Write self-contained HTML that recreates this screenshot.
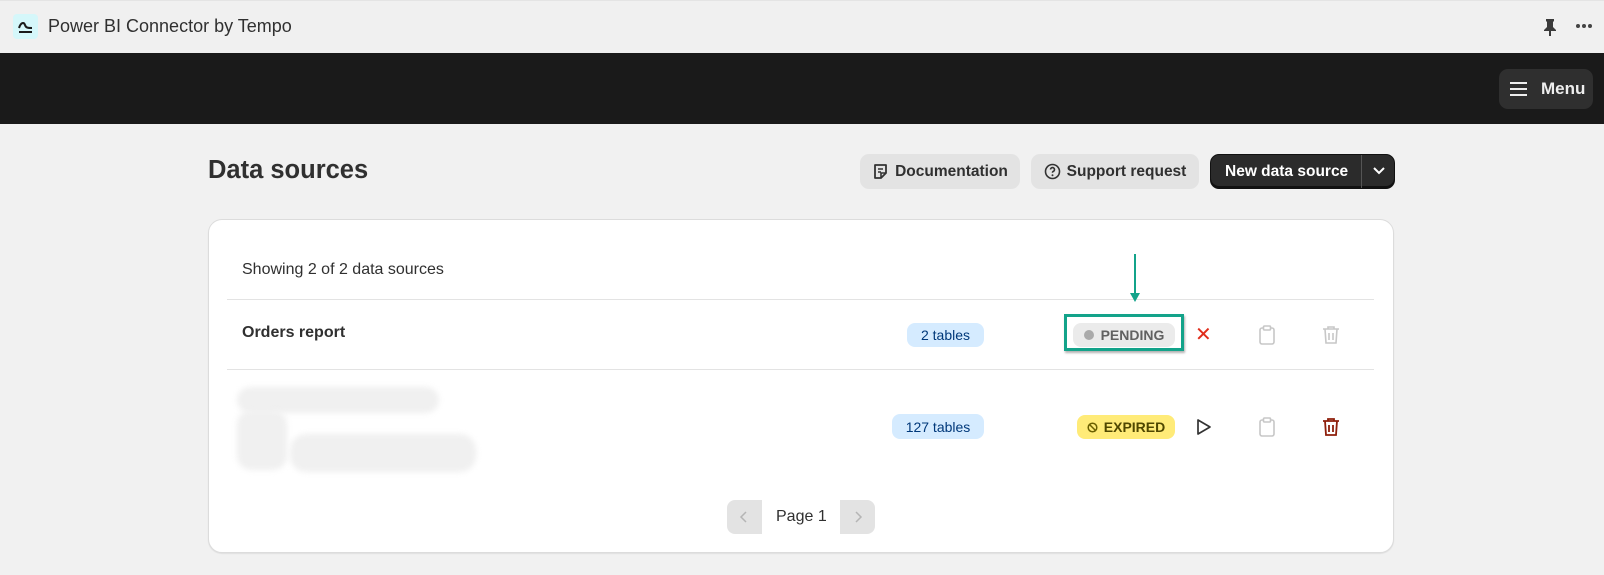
<!DOCTYPE html>
<html><head><style>
*{box-sizing:border-box;margin:0;padding:0}
body{width:1604px;height:575px;background:#f1f1f1;font-family:"Liberation Sans",sans-serif;color:#303030;position:relative;overflow:hidden}
.a{position:absolute}
.top{left:0;top:0;width:1604px;height:53px;background:#f0f0f0;border-top:1px solid #e4e4e4}
.dark{left:0;top:53px;width:1604px;height:71px;background:#1a1a1a}
.btn{position:absolute;height:35px;border-radius:9px;background:#e3e3e3;font-size:15px;font-weight:bold;color:#303030;display:flex;align-items:center;justify-content:center;gap:6px}
.card{left:208px;top:219px;width:1186px;height:334px;background:#fff;border:1px solid #dcdcdc;border-radius:14px;box-shadow:0 1px 1px rgba(0,0,0,.08)}
.pill{position:absolute;border-radius:8px;font-size:14px;display:flex;align-items:center;justify-content:center}
.hr{position:absolute;left:227px;width:1147px;height:1px;background:#e3e3e3}
</style></head><body>
<div class="a top"></div>
<div class="a" style="left:13px;top:14px;width:25px;height:25px;background:#d5f7fa;border-radius:4px"></div>
<svg class="a" style="left:16px;top:17px" width="20" height="20" viewBox="0 0 20 20"><path d="M3 11 C5 5,8 5,9 8 C10 11,12 11,16 11" fill="none" stroke="#1a1a1a" stroke-width="2"/><path d="M3 15H16" stroke="#1a1a1a" stroke-width="2"/></svg>
<div class="a" style="left:48px;top:16px;font-size:18px;color:#303030">Power BI Connector by Tempo</div>
<svg class="a" style="left:1542px;top:17px" width="16" height="20" viewBox="0 0 16 20"><path d="M4 2h8v2l-1 1v5l3 3v1H2v-1l3-3V5L4 4z" fill="#3a3a3a"/><path d="M8 14v5" stroke="#3a3a3a" stroke-width="2"/></svg>
<div class="a" style="left:1576px;top:24px;width:4px;height:4px;border-radius:2px;background:#444;box-shadow:6px 0 #444,12px 0 #444"></div>
<div class="a dark"></div>
<div class="a" style="left:1499px;top:69px;width:94px;height:40px;background:#2f2f2f;border-radius:9px"></div>
<div class="a" style="left:1510px;top:82px;width:17px;height:2px;background:#eee;box-shadow:0 6px #eee,0 12px #eee"></div>
<div class="a" style="left:1541px;top:79px;font-size:17px;font-weight:bold;color:#eee">Menu</div>
<div class="a" style="left:208px;top:156px;font-size:25.5px;font-weight:bold;color:#303030">Data sources</div>
<div class="btn" style="left:860px;top:154px;width:160px;font-size:15.5px"><svg width="17" height="17" viewBox="0 0 17 17"><path d="M3 2h11v8l-5 5H3z" fill="none" stroke="#333" stroke-width="1.8" stroke-linejoin="round"/><path d="M6 6h5M6 9h3M9 15v-5h5" fill="none" stroke="#333" stroke-width="1.6"/></svg>Documentation</div>
<div class="btn" style="left:1031px;top:154px;width:168px;font-size:15.5px"><svg width="17" height="17" viewBox="0 0 17 17"><circle cx="8.5" cy="8.5" r="7" fill="none" stroke="#333" stroke-width="1.6"/><path d="M6.5 6.5a2 2 0 1 1 2.5 2c-.5.2-.5.6-.5 1.3" fill="none" stroke="#333" stroke-width="1.6"/><circle cx="8.5" cy="12.3" r="1" fill="#333"/></svg>Support request</div>
<div class="a" style="left:1210px;top:154px;width:185px;height:35px;background:#2b2b2b;border-radius:9px;border:1px solid #111;box-shadow:inset 0 -2px #111"></div>
<div class="a" style="left:1225px;top:163px;font-size:15.5px;font-weight:bold;color:#fff">New data source</div>
<div class="a" style="left:1361px;top:155px;width:1px;height:33px;background:#555"></div>
<svg class="a" style="left:1372px;top:165px" width="14" height="12" viewBox="0 0 14 12"><path d="M2 3l5 5 5-5" fill="none" stroke="#fff" stroke-width="2"/></svg>
<div class="a card"></div>
<div class="a" style="left:242px;top:261px;font-size:16px">Showing 2 of 2 data sources</div>
<div class="hr" style="top:299px"></div>
<div class="hr" style="top:369px"></div>
<div class="a" style="left:242px;top:324px;font-size:16px;font-weight:bold">Orders report</div>
<div class="pill" style="left:907px;top:323px;width:77px;height:24px;background:#d5ebff;color:#00387a">2 tables</div>
<div class="a" style="left:1134px;top:254px;width:2px;height:44px;background:#13a38a"></div>
<svg class="a" style="left:1130px;top:293px" width="10" height="10"><path d="M0 0h10L5 9z" fill="#13a38a"/></svg>
<div class="a" style="left:1064px;top:314px;width:120px;height:37px;border:3px solid #13a38a;box-shadow:1px 2px 2px rgba(0,0,0,.3)"></div>
<div class="pill" style="left:1073px;top:323px;width:102px;height:24px;background:#ebebeb;color:#616161;font-weight:bold;gap:7px"><span style="width:10px;height:10px;border-radius:5px;background:#aaa"></span>PENDING</div>
<div class="a" style="left:1195px;top:322px;font-size:20px;color:#e02d1b">✕</div>
<svg class="a" style="left:1258px;top:325px" width="18" height="20" viewBox="0 0 18 20"><rect x="2" y="3" width="14" height="16" rx="2" fill="none" stroke="#c7c7c7" stroke-width="1.6"/><rect x="5.5" y="1" width="7" height="4" rx="1" fill="#fff" stroke="#c7c7c7" stroke-width="1.6"/></svg>
<svg class="a" style="left:1322px;top:325px" width="18" height="20" viewBox="0 0 18 20"><path d="M1 4h16M6 4V2h6v2M3 4l1 14h10l1-14M7 8v7M11 8v7" fill="none" stroke="#c7c7c7" stroke-width="1.6"/></svg>
<div class="a" style="left:237px;top:387px;width:202px;height:26px;border-radius:13px;background:#f0f0f0;filter:blur(3px)"></div>
<div class="a" style="left:237px;top:410px;width:50px;height:60px;border-radius:14px;background:#f0f0f0;filter:blur(3px)"></div>
<div class="a" style="left:290px;top:434px;width:186px;height:38px;border-radius:16px;background:#f0f0f0;filter:blur(3px)"></div>
<div class="pill" style="left:892px;top:414px;width:92px;height:25px;background:#d5ebff;color:#00387a">127 tables</div>
<div class="pill" style="left:1077px;top:415px;width:98px;height:24px;background:#ffeb78;color:#4f4700;font-weight:bold;gap:6px"><svg width="11" height="11" viewBox="0 0 11 11"><circle cx="5.5" cy="5.5" r="4.3" fill="none" stroke="#6b6000" stroke-width="1.5"/><path d="M2.5 2.5l6 6" stroke="#6b6000" stroke-width="1.5"/></svg>EXPIRED</div>
<svg class="a" style="left:1196px;top:418px" width="16" height="18" viewBox="0 0 16 18"><path d="M2 2l12 7-12 7z" fill="none" stroke="#333" stroke-width="1.7" stroke-linejoin="round"/></svg>
<svg class="a" style="left:1258px;top:417px" width="18" height="20" viewBox="0 0 18 20"><rect x="2" y="3" width="14" height="16" rx="2" fill="none" stroke="#c7c7c7" stroke-width="1.6"/><rect x="5.5" y="1" width="7" height="4" rx="1" fill="#fff" stroke="#c7c7c7" stroke-width="1.6"/></svg>
<svg class="a" style="left:1322px;top:417px" width="18" height="20" viewBox="0 0 18 20"><path d="M1 4h16M6 4V2h6v2M3 4l1 14h10l1-14M7 8v7M11 8v7" fill="none" stroke="#8e1f0b" stroke-width="1.8"/></svg>
<div class="a" style="left:727px;top:500px;width:35px;height:34px;background:#e3e3e3;border-radius:8px 0 0 8px"></div>
<div class="a" style="left:840px;top:500px;width:35px;height:34px;background:#e3e3e3;border-radius:0 8px 8px 0"></div>
<svg class="a" style="left:739px;top:511px" width="10" height="12"><path d="M7 1L2 6l5 5" fill="none" stroke="#b5b5b5" stroke-width="1.5"/></svg>
<svg class="a" style="left:853px;top:511px" width="10" height="12"><path d="M3 1l5 5-5 5" fill="none" stroke="#b5b5b5" stroke-width="1.5"/></svg>
<div class="a" style="left:776px;top:508px;font-size:16px;color:#303030">Page 1</div>
</body></html>
